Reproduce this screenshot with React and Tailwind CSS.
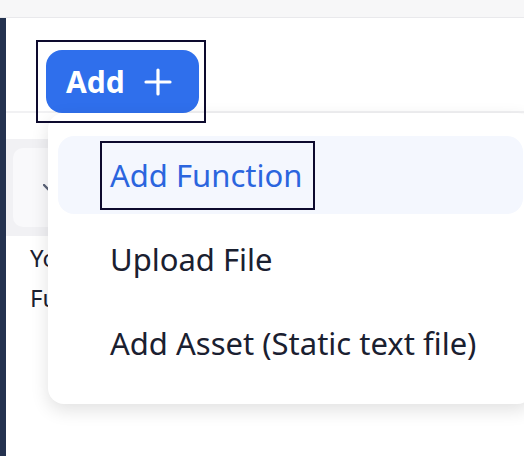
import React from "react";

const font = { fontFamily: "'Noto Sans', 'Open Sans', sans-serif" };

function MenuItem({ children, active }) {
  return (
    <div
      className={
        "h-[78px] rounded-2xl pl-[52px] flex items-center text-[31px] leading-none " +
        (active ? "bg-[#f4f7fe] text-[#2b65de]" : "text-[#1a2030]")
      }
    >
      {children}
    </div>
  );
}

export default function App() {
  return (
    <div
      className="relative w-[524px] h-[456px] overflow-hidden bg-white font-['Noto_Sans',sans-serif]"
      style={font}
    >
      {/* browser-ish top strip */}
      <div className="h-[18px] bg-[#f7f7f8] border-b border-[#e9e9ec]" />

      <div className="flex h-[438px]">
        {/* sidebar edge */}
        <div className="w-[6px] bg-[#24324f]" />

        <main className="flex-1 flex flex-col">
          {/* toolbar */}
          <div className="h-[95px] border-b-2 border-[#f1f1f3] pt-[32px] pl-[40px]">
            <button className="h-[63px] w-[153px] rounded-[16px] bg-[#2f6fec] text-white flex items-center pl-[20px] gap-[19px] text-[30px] font-bold leading-none">
              <span>Add</span>
              <svg width="28" height="28" viewBox="0 0 28 28" fill="none">
                <path d="M14 2v24M2 14h24" stroke="white" strokeWidth="3.2" strokeLinecap="round" />
              </svg>
            </button>
          </div>

          {/* content behind the menu */}
          <div className="mt-[26px] bg-[#f1f1f4] h-[97px] px-[7px] py-[9px]">
            <div className="h-[79px] rounded-[10px] bg-[#f9f9fb] flex items-center pl-[30px]">
              <svg width="12" height="8" viewBox="0 0 12 8">
                <path d="M1 1l5 5 5-5" stroke="#5b6378" strokeWidth="2.4" fill="none" strokeLinecap="round" />
              </svg>
            </div>
          </div>
          <div className="pl-[24px] pt-[2px] text-[24px] leading-[40px] text-[#1a2030]">
            <p>You</p>
            <p>Fu</p>
          </div>
        </main>
      </div>

      {/* dropdown menu */}
      <div className="absolute left-[48px] top-[113px] w-[485px] rounded-2xl bg-white shadow-[0_6px_18px_rgba(0,0,0,0.12)] px-[10px] pt-[23px] pb-[22px] flex flex-col gap-[6px]">
        <MenuItem active>Add Function</MenuItem>
        <MenuItem>Upload File</MenuItem>
        <MenuItem>Add Asset (Static text file)</MenuItem>
      </div>

      {/* focus rings */}
      <div className="absolute left-[36px] top-[40px] w-[170px] h-[83px] border-2 border-[#0d0a2e] pointer-events-none" />
      <div className="absolute left-[100px] top-[141px] w-[215px] h-[69px] border-2 border-[#0d0a2e] pointer-events-none" />
    </div>
  );
}
